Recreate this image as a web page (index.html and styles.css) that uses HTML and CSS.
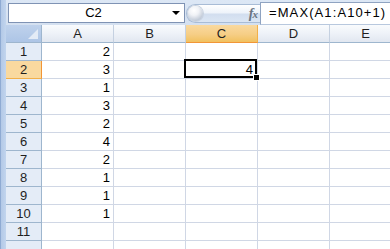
FILE: index.html
```html
<!DOCTYPE html>
<html>
<head>
<meta charset="utf-8">
<link rel="stylesheet" href="styles.css">
</head>
<body>
<div class="app">
  <div class="side"></div>
  <div class="main">
    <div class="topband"></div>
    <div class="fbar">
      <div class="namebox"><span class="ref">C2</span><span class="arrow"></span></div>
      <div class="fxpill"><span class="orb"></span><span class="fx">f<span class="x">x</span></span></div>
      <div class="formula">=MAX(A1:A10+1)</div>
    </div>
    <div class="sheet">
      <div class="corner"></div>
      <div class="ch">A</div><div class="ch">B</div><div class="ch sel">C</div><div class="ch">D</div><div class="ch">E</div>

      <div class="rh">1</div><div class="c num">2</div><div class="c"></div><div class="c"></div><div class="c"></div><div class="c"></div>
      <div class="rh sel">2</div><div class="c num">3</div><div class="c"></div><div class="c num active">4</div><div class="c"></div><div class="c"></div>
      <div class="rh">3</div><div class="c num">1</div><div class="c"></div><div class="c"></div><div class="c"></div><div class="c"></div>
      <div class="rh">4</div><div class="c num">3</div><div class="c"></div><div class="c"></div><div class="c"></div><div class="c"></div>
      <div class="rh">5</div><div class="c num">2</div><div class="c"></div><div class="c"></div><div class="c"></div><div class="c"></div>
      <div class="rh">6</div><div class="c num">4</div><div class="c"></div><div class="c"></div><div class="c"></div><div class="c"></div>
      <div class="rh">7</div><div class="c num">2</div><div class="c"></div><div class="c"></div><div class="c"></div><div class="c"></div>
      <div class="rh">8</div><div class="c num">1</div><div class="c"></div><div class="c"></div><div class="c"></div><div class="c"></div>
      <div class="rh">9</div><div class="c num">1</div><div class="c"></div><div class="c"></div><div class="c"></div><div class="c"></div>
      <div class="rh">10</div><div class="c num">1</div><div class="c"></div><div class="c"></div><div class="c"></div><div class="c"></div>
      <div class="rh">11</div><div class="c"></div><div class="c"></div><div class="c"></div><div class="c"></div><div class="c"></div>
      <div class="rh"></div><div class="c"></div><div class="c"></div><div class="c"></div><div class="c"></div><div class="c"></div>
    </div>
  </div>
</div>
</body>
</html>
```

FILE: styles.css
```css
html, body {
  margin: 0;
  padding: 0;
  width: 390px;
  height: 249px;
  overflow: hidden;
  background: #ffffff;
  font-family: "Liberation Sans", Arial, sans-serif;
  font-size: 13px;
  color: #000;
}

.app {
  display: flex;
  width: 390px;
  height: 249px;
}

.side {
  flex: 0 0 6px;
  background: linear-gradient(to right, #8fabd3 0, #8fabd3 1px, #b3c9e7 1px, #c2d5ee 6px);
}

.main {
  flex: 1 1 auto;
  display: flex;
  flex-direction: column;
  min-width: 0;
}

.topband {
  height: 3px;
  background: linear-gradient(to bottom, #c7d8ee, #d9e5f4);
}

.fbar {
  height: 27px;
  display: flex;
  align-items: flex-start;
  background: linear-gradient(to bottom, #dce7f5, #d4e0f0);
  box-sizing: border-box;
}

.namebox {
  margin: 3px 0 0 2px;
  width: 177px;
  height: 20px;
  box-sizing: border-box;
  background: #fff;
  border: 1px solid #7f93b4;
  display: flex;
  align-items: center;
}

.ref {
  flex: 1;
  text-align: center;
  padding-left: 6px;
  line-height: 18px;
}

.arrow {
  width: 0;
  height: 0;
  border-left: 4px solid transparent;
  border-right: 4px solid transparent;
  border-top: 4px solid #000;
  margin-right: 4px;
}

.fxpill {
  margin: 4px 0 0 1px;
  width: 74px;
  height: 19px;
  box-sizing: border-box;
  border: 1px solid #a8bcd6;
  border-right: 0;
  border-radius: 10px 0 0 10px;
  background: linear-gradient(to bottom, #ffffff 0%, #eef3fa 45%, #d2deef 55%, #dbe6f4 100%);
  display: flex;
  align-items: center;
  justify-content: space-between;
}

.orb {
  width: 15px;
  height: 15px;
  margin-left: 1px;
  border-radius: 50%;
  background: radial-gradient(circle at 40% 30%, #ffffff 0%, #f0f2f6 35%, #b9c3d2 80%, #9aa7ba 100%);
  box-shadow: 0 0 0 1px #c8d2e0;
}

.fx {
  font-family: "Liberation Serif", "Times New Roman", serif;
  font-style: italic;
  font-weight: bold;
  font-size: 14px;
  color: #6a7482;
  margin-right: 3px;
  letter-spacing: -1px;
}

.fx .x {
  font-size: 11px;
}

.formula {
  flex: 1;
  margin-top: 2px;
  height: 23px;
  box-sizing: border-box;
  background: #fff;
  border-top: 1px solid #8fa3c1;
  border-left: 1px solid #8fa3c1;
  border-bottom: 1px solid #b8c8de;
  padding-left: 8px;
  line-height: 20px;
  white-space: nowrap;
  overflow: hidden;
  letter-spacing: 1.1px;
}

.sheet {
  display: grid;
  grid-template-columns: 36px repeat(5, 72px);
  grid-auto-rows: 18px;
}

.sheet > div {
  box-sizing: border-box;
  border-right: 1px solid #d0d7e5;
  border-bottom: 1px solid #d0d7e5;
  line-height: 17px;
  white-space: nowrap;
}

.sheet > .corner {
  position: relative;
  background: linear-gradient(to bottom, #bfd2ec, #adc5e6);
  border-right: 1px solid #9eb6ce;
  border-bottom: 1px solid #9eb6ce;
}

.corner::after {
  content: "";
  position: absolute;
  right: 3px;
  bottom: 3px;
  width: 10px;
  height: 10px;
  background: #e3ebf6;
  clip-path: polygon(100% 0, 100% 100%, 0 100%);
}

.sheet > .ch {
  text-align: center;
  color: #1f1f1f;
  background: linear-gradient(to bottom, #f9fbfd 0%, #eef2f8 50%, #e1e7f0 100%);
  border-right: 1px solid #c5d1e1;
  border-bottom: 1px solid #9eb6ce;
}

.sheet > .ch.sel {
  background: linear-gradient(to bottom, #f9d99f 0%, #f6ce86 55%, #f1c15f 100%);
  border-right: 1px solid #f2b04a;
  border-bottom: 1px solid #f29536;
}

.sheet > .rh {
  text-align: center;
  color: #1f1f1f;
  background: #e4ecf7;
  border-right: 1px solid #9eb6ce;
  border-bottom: 1px solid #9eb6ce;
}

.sheet > .rh.sel {
  background: #f9d99f;
  border-bottom: 1px solid #f2b04a;
  border-right: 1px solid #f29536;
}

.sheet > .num {
  text-align: right;
  padding-right: 3px;
}

.sheet > .active {
  position: relative;
  padding-right: 4px;
}

.active::before {
  content: "";
  position: absolute;
  left: -2px;
  top: -2px;
  right: 0;
  bottom: 0;
  border: 2px solid #000;
}

.active::after {
  content: "";
  position: absolute;
  right: -3px;
  bottom: -3px;
  width: 5px;
  height: 5px;
  background: #000;
  border: 1px solid #fff;
  z-index: 2;
}
```
